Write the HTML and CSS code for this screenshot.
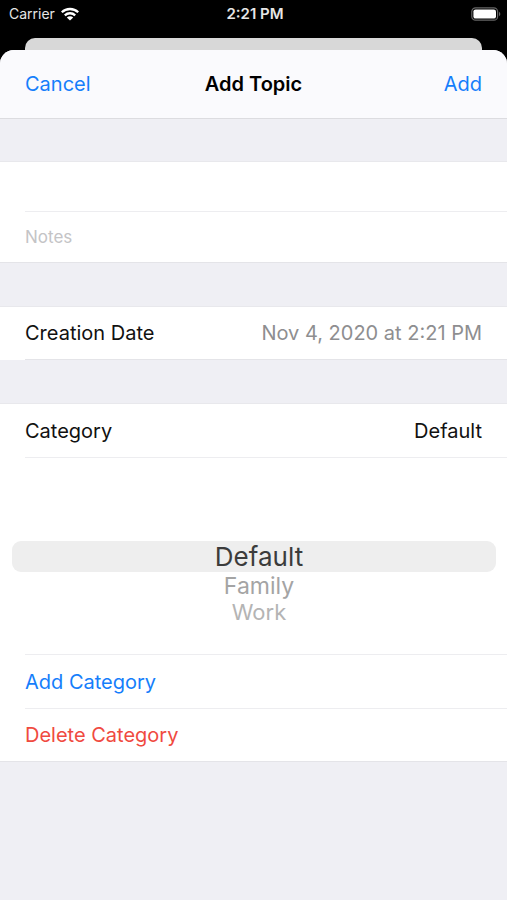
FILE: index.html
```html
<!DOCTYPE html>
<html lang="en">
<head>
<meta charset="utf-8">
<meta name="viewport" content="width=device-width, initial-scale=1">
<title>Add Topic</title>
<link rel="stylesheet" href="styles.css">
</head>
<body>
<div class="status">
  <div class="carrier">
    <span>Carrier</span>
    <svg class="wifi" viewBox="0 0 18 14" aria-hidden="true">
      <g fill="none" stroke="#fff" stroke-width="2.3">
        <path d="M0.8 5.3C5.3 0.9 12.7 0.9 17.2 5.3"/>
        <path d="M3.8 8.4C6.8 5.5 11.2 5.5 14.2 8.4"/>
      </g>
      <path d="M9 13.6L5.8 10.4C7.6 8.7 10.4 8.7 12.2 10.4Z" fill="#fff"/>
    </svg>
  </div>
  <time class="clock">2:21 PM</time>
  <svg class="battery" viewBox="0 0 30 14" aria-hidden="true">
    <rect x="0.8" y="0.8" width="25.8" height="12.4" rx="3.8" fill="none" stroke="#666" stroke-width="1.2"/>
    <rect x="2.4" y="2.4" width="22.6" height="9.2" rx="2.2" fill="#fff"/>
    <path d="M28 4.8C29.8 5.5 29.8 8.5 28 9.2Z" fill="#666"/>
  </svg>
</div>
<div class="back-sheet"></div>
<main class="sheet">
  <header class="nav">
    <button class="nav-button" type="button">Cancel</button>
    <h1 class="title">Add Topic</h1>
    <button class="nav-button nav-end" type="button">Add</button>
  </header>
  <form class="form">
    <section class="group">
      <div class="field"><input class="input" type="text" aria-label="Topic"></div>
      <div class="field"><input class="input" type="text" aria-label="Notes" placeholder="Notes"></div>
    </section>
    <section class="group group-date">
      <div class="row">
        <span>Creation Date</span>
        <time class="date" datetime="2020-11-04T14:21">Nov 4, 2020 at 2:21 PM</time>
      </div>
    </section>
    <section class="group">
      <div class="row">
        <span>Category</span>
        <span>Default</span>
      </div>
      <div class="picker">
        <button class="option selected" type="button">Default</button>
        <button class="option near" type="button">Family</button>
        <button class="option far" type="button">Work</button>
      </div>
      <button class="row action" type="button">Add Category</button>
      <button class="row action delete" type="button">Delete Category</button>
    </section>
  </form>
</main>
</body>
</html>
```

FILE: styles.css
```css
* {
  box-sizing: border-box;
}

body {
  margin: 0;
  min-height: 100vh;
  display: flex;
  flex-direction: column;
  background: #000;
  color: #111;
  font-family: Inter, "Liberation Sans", sans-serif;
  font-size: 20px;
  line-height: 24px;
}

button,
input {
  margin: 0;
  padding: 0;
  border: 0;
  background: none;
  font: inherit;
}

.status {
  display: grid;
  grid-template-columns: 1fr auto 1fr;
  align-items: center;
  height: 38px;
  padding: 0 6px 11px 9px;
  color: #e6e6e6;
  font-size: 14px;
  line-height: 18px;
}

.carrier {
  display: flex;
  align-items: center;
  gap: 6px;
}

.wifi {
  width: 18px;
  height: 14px;
}

.clock {
  font-size: 15px;
  font-weight: 600;
}

.battery {
  width: 30px;
  height: 14px;
  justify-self: end;
}

.back-sheet {
  height: 12px;
  margin: 0 25px;
  border-radius: 10px 10px 0 0;
  background: #d8d8d8;
}

.sheet {
  position: relative;
  flex: 1;
  overflow: hidden;
  border-radius: 14px 14px 0 0;
  background: #efeff4;
}

.nav {
  display: grid;
  grid-template-columns: 1fr auto 1fr;
  align-items: center;
  height: 69px;
  padding: 0 25px;
  border-bottom: 1px solid #dcdce0;
  background: #fafafd;
}

.nav-button {
  justify-self: start;
  color: #157efb;
}

.nav-end {
  justify-self: end;
}

.title {
  margin: 0;
  color: #000;
  font-size: 20px;
  font-weight: 600;
}

.form {
  display: flex;
  flex-direction: column;
  gap: 43px;
  padding-top: 42px;
}

.group {
  border-top: 1px solid #e8e8ec;
  border-bottom: 1px solid #e4e4e8;
  background: #fff;
}

.group-date {
  padding-left: 25px;
  border-bottom: 0;
}

.field {
  height: 50px;
  padding-left: 25px;
}

.input {
  display: block;
  width: 100%;
  height: 100%;
  font-size: 17px;
  outline: 0;
}

.field:first-child .input {
  border-bottom: 1px solid #ededf0;
}

.input::placeholder {
  color: #c4c4c6;
  opacity: 1;
}

.row {
  position: relative;
  display: flex;
  align-items: center;
  justify-content: space-between;
  width: 100%;
  height: 53px;
  padding: 0 25px;
}

.group-date .row {
  padding-left: 0;
  border-bottom: 1px solid #e4e4e8;
}

.date {
  color: #8e8e90;
}

.picker {
  display: flex;
  flex-direction: column;
  align-items: center;
  height: 198px;
  margin-left: 25px;
  padding-top: 83px;
  border-top: 1px solid #ededf0;
  border-bottom: 1px solid #ededf0;
}

.option {
  align-self: stretch;
  margin: 0 11px 0 -13px;
  padding-left: 10px;
}

.selected {
  height: 31px;
  border-radius: 9px;
  background: #eee;
  color: #3c3c3c;
  font-size: 26px;
}

.near {
  height: 28px;
  color: #a4a4a4;
  font-size: 23px;
}

.far {
  height: 24px;
  color: #b4b4b4;
  font-size: 22px;
}

.action {
  color: #157efb;
}

.delete {
  color: #f04a40;
}

.delete::before {
  content: "";
  position: absolute;
  top: 0;
  right: 0;
  left: 25px;
  border-top: 1px solid #ededf0;
}
```
